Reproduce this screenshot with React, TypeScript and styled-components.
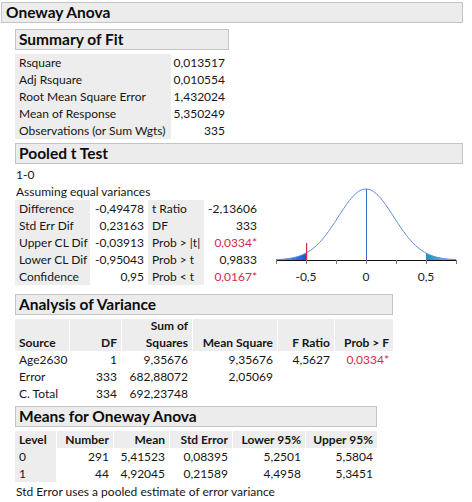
import React from 'react';
import styled, { createGlobalStyle } from 'styled-components';

const Global = createGlobalStyle`
  html, body { margin: 0; padding: 0; background: #ffffff; }
  body {
    font-family: Lato, "Liberation Sans", sans-serif;
    color: #161616;
    font-size: 12px;
  }
`;

const Page = styled.div`
  padding: 2px 0 0 1px;
  width: 462px;
`;

const OuterHeader = styled.div`
  box-sizing: border-box;
  width: 462px;
  height: 21px;
  border: 1px solid #c4c4c4;
  background: #ececec;
  font-weight: 700;
  font-size: 15.5px;
  line-height: 19px;
  padding-left: 4px;
  color: #0d0d0d;
`;

const Body = styled.div`
  padding: 6px 0 0 14px;
  display: flex;
  flex-direction: column;
  align-items: flex-start;
  gap: 4px;
`;

const Section = styled.div`
  display: flex;
  flex-direction: column;
  align-items: stretch;
`;

const SectionHeader = styled.div`
  box-sizing: border-box;
  height: 21px;
  border: 1px solid #c4c4c4;
  background: #ececec;
  font-weight: 700;
  font-size: 15.5px;
  line-height: 19px;
  padding-left: 3px;
  color: #0d0d0d;
`;

const Grid = styled.div<{ $cols: string; $gap?: number; $top?: number }>`
  display: grid;
  grid-template-columns: ${(p) => p.$cols};
  column-gap: ${(p) => p.$gap ?? 0}px;
  margin-top: ${(p) => p.$top ?? 4}px;
`;

const Cell = styled.div<{ $shade?: boolean; $right?: boolean; $red?: boolean; $bold?: boolean; $h?: number }>`
  height: ${(p) => p.$h ?? 17}px;
  line-height: 17px;
  white-space: nowrap;
  padding: 0 4px;
  background: ${(p) => (p.$shade ? '#ededed' : 'transparent')};
  text-align: ${(p) => (p.$right ? 'right' : 'left')};
  color: ${(p) => (p.$red ? '#d42a48' : 'inherit')};
  font-weight: ${(p) => (p.$bold ? 700 : 400)};
  display: flex;
  flex-direction: column;
  justify-content: flex-end;
  align-items: ${(p) => (p.$right ? 'flex-end' : 'flex-start')};
`;

const Line = styled.div`
  height: 17px;
  line-height: 17px;
  padding-left: 1px;
  white-space: nowrap;
`;

const TTestBody = styled.div`
  display: flex;
  flex-direction: row;
  margin-top: 2px;
`;

const TTestLeft = styled.div`
  display: flex;
  flex-direction: column;
  width: 246px;
`;

const ChartSvg = styled.svg`
  display: block;
  width: 201px;
  height: 124px;
  margin-left: 1px;
`;

const Footer = styled.div`
  height: 17px;
  line-height: 17px;
  margin-top: 1px;
  padding-left: 1px;
  white-space: nowrap;
`;

const summary: [string, string][] = [
  ['Rsquare', '0,013517'],
  ['Adj Rsquare', '0,010554'],
  ['Root Mean Square Error', '1,432024'],
  ['Mean of Response', '5,350249'],
  ['Observations (or Sum Wgts)', '335'],
];

const ttest: [string, string, string, string, boolean][] = [
  ['Difference', '-0,49478', 't Ratio', '-2,13606', false],
  ['Std Err Dif', '0,23163', 'DF', '333', false],
  ['Upper CL Dif', '-0,03913', 'Prob > |t|', '0,0334*', true],
  ['Lower CL Dif', '-0,95043', 'Prob > t', '0,9833', false],
  ['Confidence', '0,95', 'Prob < t', '0,0167*', true],
];

const anovaRows: string[][] = [
  ['Age2630', '1', '9,35676', '9,35676', '4,5627', '0,0334*'],
  ['Error', '333', '682,88072', '2,05069', '', ''],
  ['C. Total', '334', '692,23748', '', '', ''],
];

const meansRows: string[][] = [
  ['0', '291', '5,41523', '0,08395', '5,2501', '5,5804'],
  ['1', '44', '4,92045', '0,21589', '4,4958', '5,3451'],
];

// Chart geometry (svg coordinates)
const X0 = 104;
const SCALE = 120;
const AXIS_Y = 94;
const PEAK = 71;
const SD = 0.23163;
const px = (v: number) => X0 + v * SCALE;
const py = (v: number) => AXIS_Y - PEAK * Math.exp(-((v / SD) ** 2) / 2);

function curvePath(a: number, b: number, n: number) {
  const pts: string[] = [];
  for (let i = 0; i <= n; i++) {
    const v = a + ((b - a) * i) / n;
    pts.push(`${px(v).toFixed(2)},${py(v).toFixed(2)}`);
  }
  return pts;
}

function Chart() {
  const full = 'M' + curvePath(-0.75, 0.75, 120).join(' L');
  const left = 'M' + px(-0.75) + ',' + AXIS_Y + ' L' + curvePath(-0.75, -0.5, 20).join(' L') + ` L${px(-0.5)},${AXIS_Y} Z`;
  const right = 'M' + px(0.5) + ',' + AXIS_Y + ' L' + curvePath(0.5, 0.75, 20).join(' L') + ` L${px(0.75)},${AXIS_Y} Z`;
  const ticks = [-0.75, -0.5, -0.25, 0, 0.25, 0.5, 0.75];
  return (
    <ChartSvg viewBox="0 0 201 124">
      <defs>
        <linearGradient id="lg" x1="0" x2="1" y1="0" y2="0">
          <stop offset="0" stopColor="#7aa6f0" />
          <stop offset="1" stopColor="#1a56d6" />
        </linearGradient>
        <linearGradient id="rg" x1="0" x2="1" y1="0" y2="0">
          <stop offset="0" stopColor="#1893c4" />
          <stop offset="1" stopColor="#8cc9e6" />
        </linearGradient>
      </defs>
      <path d={left} fill="url(#lg)" />
      <path d={right} fill="url(#rg)" />
      <path d={full} fill="none" stroke="#5a8be0" strokeWidth="1" />
      <line x1={X0 + 0.5} y1={py(0)} x2={X0 + 0.5} y2={AXIS_Y} stroke="#3d6cc4" strokeWidth="1" />
      <line x1={px(-0.49478)} y1={77} x2={px(-0.49478)} y2={AXIS_Y} stroke="#d0264a" strokeWidth="1.2" />
      <line x1={px(-0.75)} y1={AXIS_Y + 0.5} x2={px(0.75)} y2={AXIS_Y + 0.5} stroke="#111" strokeWidth="1" />
      {ticks.map((t) => (
        <line key={t} x1={Math.round(px(t)) + 0.5} y1={AXIS_Y} x2={Math.round(px(t)) + 0.5} y2={AXIS_Y + 4} stroke="#777" strokeWidth="1" />
      ))}
      {[
        [-0.5, '-0,5'],
        [0, '0'],
        [0.5, '0,5'],
      ].map(([v, s]) => (
        <text key={s as string} x={px(v as number)} y={115} textAnchor="middle" fontSize="12" fontFamily="Lato, 'Liberation Sans', sans-serif" fill="#222">
          {s}
        </text>
      ))}
    </ChartSvg>
  );
}

export default function App() {
  return (
    <>
      <Global />
      <Page>
        <OuterHeader>Oneway Anova</OuterHeader>
        <Body>
          <Section>
            <SectionHeader>Summary of Fit</SectionHeader>
            <Grid $cols="156px 58px">
              {summary.map(([k, v]) => (
                <React.Fragment key={k}>
                  <Cell $shade>{k}</Cell>
                  <Cell $right>{v}</Cell>
                </React.Fragment>
              ))}
            </Grid>
          </Section>

          <Section>
            <SectionHeader>Pooled t Test</SectionHeader>
            <TTestBody>
              <TTestLeft>
                <Line>1-0</Line>
                <Line>Assuming equal variances</Line>
                <Grid $cols="75px 58px 56px 57px" $top={0}>
                  {ttest.map(([a, b, c, d, red]) => (
                    <React.Fragment key={a}>
                      <Cell $shade>{a}</Cell>
                      <Cell $right>{b}</Cell>
                      <Cell $shade>{c}</Cell>
                      <Cell $right $red={red}>{d}</Cell>
                    </React.Fragment>
                  ))}
                </Grid>
              </TTestLeft>
              <Chart />
            </TTestBody>
          </Section>

          <Section>
            <SectionHeader>Analysis of Variance</SectionHeader>
            <Grid $cols="54px 51px 70px 84px 56px 58px" $gap={1}>
              <Cell $shade $bold $h={32}>Source</Cell>
              <Cell $shade $bold $right $h={32}>DF</Cell>
              <Cell $shade $bold $right $h={32}>
                <span>Sum of</span>
                <span>Squares</span>
              </Cell>
              <Cell $shade $bold $right $h={32}>Mean Square</Cell>
              <Cell $shade $bold $right $h={32}>F Ratio</Cell>
              <Cell $shade $bold $right $h={32}>Prob &gt; F</Cell>
              {anovaRows.map((r) => (
                <React.Fragment key={r[0]}>
                  <Cell>{r[0]}</Cell>
                  <Cell $right>{r[1]}</Cell>
                  <Cell $right>{r[2]}</Cell>
                  <Cell $right>{r[3]}</Cell>
                  <Cell $right>{r[4]}</Cell>
                  <Cell $right $red={r[5] !== ''}>{r[5]}</Cell>
                </React.Fragment>
              ))}
            </Grid>
          </Section>

          <Section>
            <SectionHeader>Means for Oneway Anova</SectionHeader>
            <Grid $cols="41px 56px 55px 62px 72px 71px" $gap={1}>
              <Cell $shade $bold>Level</Cell>
              <Cell $shade $bold $right>Number</Cell>
              <Cell $shade $bold $right>Mean</Cell>
              <Cell $shade $bold $right>Std Error</Cell>
              <Cell $shade $bold $right>Lower 95%</Cell>
              <Cell $shade $bold $right>Upper 95%</Cell>
              {meansRows.map((r) => (
                <React.Fragment key={r[0]}>
                  <Cell $shade>{r[0]}</Cell>
                  <Cell $right>{r[1]}</Cell>
                  <Cell $right>{r[2]}</Cell>
                  <Cell $right>{r[3]}</Cell>
                  <Cell $right>{r[4]}</Cell>
                  <Cell $right>{r[5]}</Cell>
                </React.Fragment>
              ))}
            </Grid>
            <Footer>Std Error uses a pooled estimate of error variance</Footer>
          </Section>
        </Body>
      </Page>
    </>
  );
}
